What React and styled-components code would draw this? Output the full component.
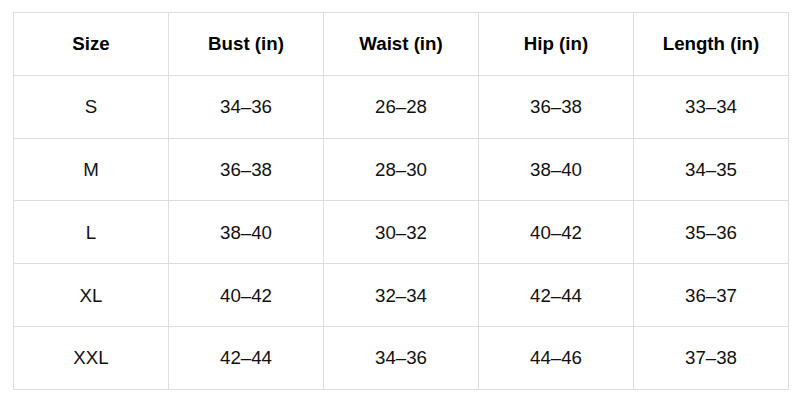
import React from "react";
import styled, { createGlobalStyle } from "styled-components";

const GlobalStyle = createGlobalStyle`
  html, body {
    margin: 0;
    padding: 0;
    background: #ffffff;
  }
  body {
    font-family: "Liberation Sans", Arial, sans-serif;
    color: #111111;
  }
`;

const Page = styled.div`
  padding: 12px 11px 0 13px;
`;

const Table = styled.table`
  width: 776px;
  border-collapse: collapse;
  table-layout: fixed;
  font-size: 18.7px;
`;

const Cell = styled.td`
  border: 1px solid #dddddd;
  height: 61.8px;
  padding: 0 8px;
  text-align: center;
  vertical-align: middle;
  line-height: 21px;
`;

const Head = styled(Cell).attrs({ as: "th" })`
  font-weight: 700;
  color: #000000;
`;

const columns = ["Size", "Bust (in)", "Waist (in)", "Hip (in)", "Length (in)"];

const rows = [
  ["S", "34–36", "26–28", "36–38", "33–34"],
  ["M", "36–38", "28–30", "38–40", "34–35"],
  ["L", "38–40", "30–32", "40–42", "35–36"],
  ["XL", "40–42", "32–34", "42–44", "36–37"],
  ["XXL", "42–44", "34–36", "44–46", "37–38"],
];

function App() {
  return (
    <Page>
      <GlobalStyle />
      <Table>
        <thead>
          <tr>
            {columns.map((c) => (
              <Head key={c}>{c}</Head>
            ))}
          </tr>
        </thead>
        <tbody>
          {rows.map((r) => (
            <tr key={r[0]}>
              {r.map((v, i) => (
                <Cell key={i}>{v}</Cell>
              ))}
            </tr>
          ))}
        </tbody>
      </Table>
    </Page>
  );
}

export default App;
